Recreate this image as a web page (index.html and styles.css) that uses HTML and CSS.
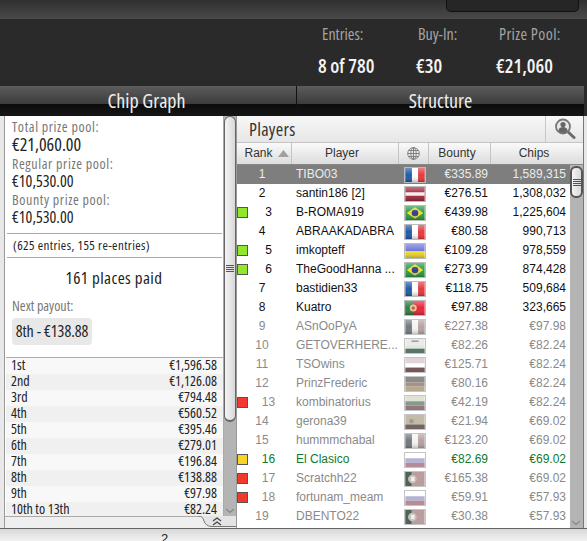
FILE: index.html
```html
<!DOCTYPE html>
<html lang="en">
<head>
    <meta charset="UTF-8">
    <title>Tournament Lobby</title>
    <link rel="stylesheet" href="styles.css">
</head>
<body>
    <svg class="defs" width="0" height="0">
        <linearGradient id="gloss" x1="0" y1="0" x2="0" y2="1">
            <stop offset="0" stop-color="#fff" stop-opacity=".35"/>
            <stop offset=".5" stop-color="#fff" stop-opacity="0"/>
            <stop offset="1" stop-color="#000" stop-opacity=".25"/>
        </linearGradient>
        <symbol id="fr" viewBox="0 0 22 16"><rect width="22" height="16" fill="#fff"/><rect width="7.500" height="16" fill="#1f5aa8"/><rect x="14.500" width="7.500" height="16" fill="#e5393c"/><rect width="22" height="16" fill="url(#gloss)"/></symbol>
        <symbol id="fr-out" viewBox="0 0 22 16"><rect width="22" height="16" fill="#f2f2f2"/><rect width="7.500" height="16" fill="#5a6068"/><rect x="14.500" width="7.500" height="16" fill="#a99090"/><rect width="22" height="16" fill="url(#gloss)"/></symbol>
        <symbol id="lv" viewBox="0 0 22 16"><rect width="22" height="16" fill="#a3283c"/><rect y="6" width="22" height="4" fill="#f4eeee"/><rect width="22" height="16" fill="url(#gloss)"/></symbol>
        <symbol id="br" viewBox="0 0 22 16"><rect width="22" height="16" fill="#2a9a45"/><path d="M11 1.500 20.500 8 11 14.500 1.500 8z" fill="#f2dc2c"/><circle cx="11" cy="8" r="3.800" fill="#2f3f8f"/><rect width="22" height="16" fill="url(#gloss)"/></symbol>
        <symbol id="ua" viewBox="0 0 22 16"><rect width="22" height="8" fill="#6d74d8"/><rect y="8" width="22" height="8" fill="#f0d92c"/><rect width="22" height="16" fill="url(#gloss)"/></symbol>
        <symbol id="pt" viewBox="0 0 22 16"><rect width="22" height="16" fill="#e5263a"/><rect width="9" height="16" fill="#2f7d45"/><circle cx="9" cy="8" r="4" fill="#e3c98a"/><circle cx="9" cy="8" r="2" fill="#c65a4a"/><rect width="22" height="16" fill="url(#gloss)"/></symbol>
        <symbol id="ae" viewBox="0 0 22 16"><rect width="22" height="6" fill="#e8e8e8"/><rect y="1.500" x="7" width="8" height="2" fill="#8a9a90"/><rect y="6" width="22" height="5" fill="#e2e2e2"/><rect y="11" width="22" height="5" fill="#3a6048"/></symbol>
        <symbol id="at" viewBox="0 0 22 16"><rect width="22" height="16" fill="#dccdd2"/><rect y="6" width="22" height="5" fill="#fff"/><rect y="11" width="22" height="5" fill="#5a3a3f"/></symbol>
        <symbol id="de" viewBox="0 0 22 16"><rect width="22" height="6" fill="#777"/><rect y="6" width="22" height="5" fill="#968078"/><rect y="11" width="22" height="5" fill="#a89c78"/></symbol>
        <symbol id="bg" viewBox="0 0 22 16"><rect width="22" height="6" fill="#dcdcd0"/><rect y="6" width="22" height="5" fill="#6f8a78"/><rect y="11" width="22" height="5" fill="#80606a"/></symbol>
        <symbol id="es" viewBox="0 0 22 16"><rect width="22" height="16" fill="#b9ae98"/><rect y="11" width="22" height="5" fill="#5c4a48"/><circle cx="7" cy="7" r="2.500" fill="#86907a"/></symbol>
        <symbol id="ru" viewBox="0 0 22 16"><rect width="22" height="6" fill="#fff"/><rect y="6" width="22" height="5" fill="#a6a6d0"/><rect y="11" width="22" height="5" fill="#a87885"/></symbol>
        <symbol id="ma" viewBox="0 0 22 16"><rect width="22" height="16" fill="#b08c90"/><rect width="7" height="16" fill="#2c4a3c"/><circle cx="8" cy="8" r="5" fill="#bdb6ad"/><rect x="6.500" y="5.500" width="4" height="5" fill="#eee"/></symbol>
    </svg>

    <div class="topbar"><div class="top-btn"></div></div>

    <div class="summary">
        <div class="stat stat-entries">
            <span class="stat-label">Entries:</span>
            <span class="stat-value">8 of 780</span>
        </div>
        <div class="stat stat-buyin">
            <span class="stat-label">Buy-In:</span>
            <span class="stat-value">€30</span>
        </div>
        <div class="stat stat-pool">
            <span class="stat-label">Prize Pool:</span>
            <span class="stat-value">€21,060</span>
        </div>
    </div>

    <div class="tabs">
        <div class="tab tab-graph">Chip Graph</div>
        <div class="tab tab-structure">Structure</div>
    </div>

    <div class="main">
        <div class="prize-panel">
            <div class="prize-body">
                <div class="prize-scroll">
                    <div class="pools">
                        <div class="pool-label">Total prize pool:</div>
                        <div class="pool-total">€21,060.00</div>
                        <div class="pool-label">Regular prize pool:</div>
                        <div class="pool-value">€10,530.00</div>
                        <div class="pool-label">Bounty prize pool:</div>
                        <div class="pool-value">€10,530.00</div>
                    </div>
                    <div class="entries-note">(625 entries, 155 re-entries)</div>
                    <div class="places">161 places paid</div>
                    <div class="next-label">Next payout:</div>
                    <div class="next-box">8th - €138.88</div>
                    <ul class="payouts">
                        <li><span>1st</span><span>€1,596.58</span></li>
                        <li><span>2nd</span><span>€1,126.08</span></li>
                        <li><span>3rd</span><span>€794.48</span></li>
                        <li><span>4th</span><span>€560.52</span></li>
                        <li><span>5th</span><span>€395.46</span></li>
                        <li><span>6th</span><span>€279.01</span></li>
                        <li><span>7th</span><span>€196.84</span></li>
                        <li><span>8th</span><span>€138.88</span></li>
                        <li><span>9th</span><span>€97.98</span></li>
                        <li><span>10th to 13th</span><span>€82.24</span></li>
                    </ul>
                </div>
                <div class="scrollbar scrollbar-left">
                    <div class="thumb thumb-left"><div class="grip"></div></div>
                    <svg class="arrow-down" width="10" height="6" viewBox="0 0 10 6"><path d="M1 1l4 3.500L9 1" fill="none" stroke="#888" stroke-width="1.200"/></svg>
                </div>
            </div>
            <div class="prize-foot">
                <svg class="collapse" width="38" height="11" viewBox="0 0 38 11">
                    <path d="M0 0C4 0 5 2 6 5 7 8 9 10 13 10.500H38V0z" fill="#e4e4e4"/>
                    <path d="M0 0C4 0 5 2 6 5 7 8 9 10 13 10.500H38" fill="none" stroke="#777"/>
                    <path d="M15 5l4-3 4 3M15 9l4-3 4 3" fill="none" stroke="#444" stroke-width="1.200"/>
                </svg>
            </div>
        </div>

        <div class="players">
            <div class="players-title">
                <span class="players-name">Players</span>
                <div class="search-btn">
                    <svg width="22" height="22" viewBox="0 0 22 22">
                        <path d="M13 13l7 6.500" stroke="#6b6b6b" stroke-width="3" stroke-linecap="round"/>
                        <circle cx="9" cy="8.500" r="7" fill="#e8e8e8" stroke="#777" stroke-width="1.800"/>
                        <circle cx="9" cy="6.500" r="2.600" fill="#666"/>
                        <path d="M4.500 13c0-3 2-4 4.500-4s4.500 1 4.500 4a6 6 0 0 1-9 0z" fill="#666"/>
                    </svg>
                </div>
            </div>
            <div class="list-head">
                <div class="col-head head-rank">Rank<svg class="sort" width="11" height="7" viewBox="0 0 11 7"><path d="M5.500 0 11 7H0z" fill="#a0a0a0"/></svg></div>
                <div class="col-head head-player">Player</div>
                <div class="col-head head-globe">
                    <svg width="13" height="13" viewBox="0 0 13 13" fill="none" stroke="#777" stroke-width=".9"><circle cx="6.500" cy="6.500" r="5.800"/><ellipse cx="6.500" cy="6.500" rx="2.700" ry="5.800"/><path d="M.7 6.500h11.600M1.500 3.500h10M1.500 9.500h10M6.500.7v11.600"/></svg>
                </div>
                <div class="col-head head-bounty">Bounty</div>
                <div class="col-head head-chips">Chips</div>
            </div>
            <div class="list-body">
                <div class="rows">
                    <div class="row row-selected"><div class="rank">1</div><div class="name">TIBO03</div><svg class="flag"><use href="#fr"/></svg><div class="bounty">€335.89</div><div class="chips">1,589,315</div></div>
                    <div class="row"><div class="rank">2</div><div class="name">santin186 [2]</div><svg class="flag"><use href="#lv"/></svg><div class="bounty">€276.51</div><div class="chips">1,308,032</div></div>
                    <div class="row"><div class="rank marked"><i class="mark mark-green"></i>3</div><div class="name">B-ROMA919</div><svg class="flag"><use href="#br"/></svg><div class="bounty">€439.98</div><div class="chips">1,225,604</div></div>
                    <div class="row"><div class="rank">4</div><div class="name">ABRAAKADABRA</div><svg class="flag"><use href="#fr"/></svg><div class="bounty">€80.58</div><div class="chips">990,713</div></div>
                    <div class="row"><div class="rank marked"><i class="mark mark-green"></i>5</div><div class="name">imkopteff</div><svg class="flag"><use href="#ua"/></svg><div class="bounty">€109.28</div><div class="chips">978,559</div></div>
                    <div class="row"><div class="rank marked"><i class="mark mark-green"></i>6</div><div class="name">TheGoodHanna ...</div><svg class="flag"><use href="#br"/></svg><div class="bounty">€273.99</div><div class="chips">874,428</div></div>
                    <div class="row"><div class="rank">7</div><div class="name">bastidien33</div><svg class="flag"><use href="#fr"/></svg><div class="bounty">€118.75</div><div class="chips">509,684</div></div>
                    <div class="row"><div class="rank">8</div><div class="name">Kuatro</div><svg class="flag"><use href="#pt"/></svg><div class="bounty">€97.88</div><div class="chips">323,665</div></div>
                    <div class="row row-out"><div class="rank">9</div><div class="name">ASnOoPyA</div><svg class="flag"><use href="#fr-out"/></svg><div class="bounty">€227.38</div><div class="chips">€97.98</div></div>
                    <div class="row row-out"><div class="rank">10</div><div class="name">GETOVERHERE...</div><svg class="flag"><use href="#ae"/></svg><div class="bounty">€82.26</div><div class="chips">€82.24</div></div>
                    <div class="row row-out"><div class="rank">11</div><div class="name">TSOwins</div><svg class="flag"><use href="#at"/></svg><div class="bounty">€125.71</div><div class="chips">€82.24</div></div>
                    <div class="row row-out"><div class="rank">12</div><div class="name">PrinzFrederic</div><svg class="flag"><use href="#de"/></svg><div class="bounty">€80.16</div><div class="chips">€82.24</div></div>
                    <div class="row row-out"><div class="rank marked"><i class="mark mark-red"></i>13</div><div class="name">kombinatorius</div><svg class="flag"><use href="#bg"/></svg><div class="bounty">€42.19</div><div class="chips">€82.24</div></div>
                    <div class="row row-out"><div class="rank">14</div><div class="name">gerona39</div><svg class="flag"><use href="#es"/></svg><div class="bounty">€21.94</div><div class="chips">€69.02</div></div>
                    <div class="row row-out"><div class="rank">15</div><div class="name">hummmchabal</div><svg class="flag"><use href="#fr-out"/></svg><div class="bounty">€123.20</div><div class="chips">€69.02</div></div>
                    <div class="row row-out row-hero"><div class="rank marked"><i class="mark mark-yellow"></i>16</div><div class="name">El Clasico</div><svg class="flag"><use href="#ru"/></svg><div class="bounty">€82.69</div><div class="chips">€69.02</div></div>
                    <div class="row row-out"><div class="rank marked"><i class="mark mark-red"></i>17</div><div class="name">Scratchh22</div><svg class="flag"><use href="#ma"/></svg><div class="bounty">€165.38</div><div class="chips">€69.02</div></div>
                    <div class="row row-out"><div class="rank marked"><i class="mark mark-red"></i>18</div><div class="name">fortunam_meam</div><svg class="flag"><use href="#ru"/></svg><div class="bounty">€59.91</div><div class="chips">€57.93</div></div>
                    <div class="row row-out"><div class="rank">19</div><div class="name">DBENTO22</div><svg class="flag"><use href="#ma"/></svg><div class="bounty">€30.38</div><div class="chips">€57.93</div></div>
                    <div class="row row-out"><div class="rank"></div><div class="name"></div><svg class="flag"><use href="#ru"/></svg></div>
                </div>
                <div class="scrollbar scrollbar-right">
                    <div class="thumb thumb-right"><div class="grip"></div></div>
                    <svg class="arrow-down" width="10" height="6" viewBox="0 0 10 6"><path d="M1 1l4 3.500L9 1" fill="none" stroke="#888" stroke-width="1.200"/></svg>
                </div>
            </div>
        </div>
    </div>

    <div class="bottom-bar"><span class="page-num">2</span></div>
</body>
</html>
```

FILE: styles.css
```css
:root {
    --narrow: "Open Sans", "Liberation Sans", sans-serif;
}

* {
    margin: 0;
    padding: 0;
    box-sizing: border-box;
}

body {
    width: 587px;
    height: 541px;
    overflow: hidden;
    background: #ececec;
    font-family: "Liberation Sans", Arial, sans-serif;
    font-size: 12px;
}

.defs {
    position: absolute;
}

/* top dark area */
.topbar {
    height: 19px;
    padding-left: 446px;
    background: linear-gradient(#303030, #4a4a4a);
}

.top-btn {
    width: 133px;
    height: 12px;
    background: #262626;
    border: 1px solid #111;
    border-top: none;
    border-radius: 0 0 5px 5px;
}

.summary {
    height: 67px;
    padding: 7px 0 0 318px;
    display: flex;
    background: #2a2a2a;
    font-family: var(--narrow);
    font-stretch: 75%;
}

.stat {
    display: flex;
    flex-direction: column;
    gap: 13px;
}

.stat-entries { width: 98px; }
.stat-buyin { width: 80px; }

.stat-label {
    color: #a4a4a4;
    font-size: 16px;
    line-height: 17px;
}

.stat-value {
    color: #f4f4f4;
    font-size: 19.5px;
    font-weight: 600;
    line-height: 20px;
    white-space: nowrap;
}

.stat-entries .stat-label { padding-left: 4px; }
.stat-buyin .stat-label { padding-left: 2px; }
.stat-pool .stat-label { padding-left: 3px; letter-spacing: .4px; }

.tabs {
    height: 30px;
    display: flex;
    background: #2a2a2a;
}

.tab {
    text-align: center;
    color: #eee;
    font-family: var(--narrow);
    font-stretch: 75%;
    font-size: 20px;
    line-height: 29px;
    background: linear-gradient(#5c5c5c, #3c3c3c 60%, #0c0c0c 60%, #161616);
}

.tab-graph {
    width: 297px;
    padding-right: 3px;
    border-right: 1px solid #111;
}

.tab-structure {
    width: 287px;
}

/* main two panels */
.main {
    height: 413px;
    display: flex;
    padding: 0 3px 0 4px;
    border-bottom: 1px solid #666;
    background: #e8e8e8;
}

.prize-panel {
    width: 232px;
    border-left: 1px solid #999;
    display: flex;
    flex-direction: column;
}

.prize-body {
    flex: 1;
    display: flex;
    min-height: 0;
    background: #fff;
}

.prize-scroll {
    width: 219px;
    font-family: var(--narrow);
    font-stretch: 75%;
    color: #222;
}

.pools {
    padding: 3px 0 0 5px;
    border-bottom: 1px solid #aaa;
    margin: 0 1px 0 2px;
    height: 118px;
}

.pool-label {
    color: #777;
    font-size: 14px;
    letter-spacing: .6px;
    line-height: 16px;
}

.pool-total {
    font-size: 18px;
    line-height: 18px;
    margin-bottom: 3px;
}

.pool-value {
    font-size: 16px;
    line-height: 18px;
    margin-bottom: 2px;
}

.entries-note {
    margin: 0 1px 0 2px;
    height: 24px;
    padding-left: 6px;
    line-height: 23px;
    font-size: 13px;
    letter-spacing: .4px;
    border-bottom: 1px solid #aaa;
}

.places {
    text-align: center;
    font-size: 17px;
    letter-spacing: .4px;
    line-height: 20px;
    margin-top: 10px;
}

.next-label {
    color: #777;
    font-size: 14px;
    line-height: 16px;
    margin: 10px 0 0 7px;
}

.next-box {
    width: 80px;
    height: 27px;
    margin: 4px 0 0 7px;
    background: #e8e8e8;
    border-radius: 4px;
    font-size: 16px;
    line-height: 26px;
    text-align: center;
    white-space: nowrap;
}

.payouts {
    list-style: none;
    margin: 12px 0 0 1px;
    border-top: 1px solid #aaa;
    font-size: 14px;
}

.payouts li {
    height: 16px;
    display: flex;
    justify-content: space-between;
    padding: 0 6px 0 5px;
    line-height: 13px;
    background: #f8f8f8;
}

.payouts li:nth-child(even) {
    background: #f0f0f0;
}

.prize-foot {
    height: 12px;
    display: flex;
    justify-content: flex-end;
    background: #efefef;
    border-top: 1px solid #aaa;
}

.collapse {
    display: block;
    margin-top: -1px;
}

/* scrollbars */
.scrollbar {
    width: 13px;
    position: relative;
    background: #b4b4b4;
}

.scrollbar-left {
    border-left: 1px solid #aaa;
}

.thumb {
    border: 2px solid #555;
    border-radius: 6px;
    background: linear-gradient(90deg, #f4f4f4, #d8d8d8);
    display: flex;
    align-items: center;
    justify-content: center;
}

.thumb-left {
    height: 306px;
    width: 12px;
    border-width: 1px 1px 2px;
    border-color: #666;
}

.thumb-right {
    height: 32px;
    width: 13px;
    margin-top: 1px;
}

.grip {
    width: 8px;
    height: 7px;
    background: repeating-linear-gradient(#555 0 1px, transparent 1px 2px);
}

.arrow-down {
    position: absolute;
    bottom: 2px;
    left: 1px;
}

/* players list */
.players {
    flex: 1;
    display: flex;
    flex-direction: column;
    min-width: 0;
    border-left: 1px solid #999;
    border-right: 1px solid #777;
}

.players-title {
    height: 27px;
    display: flex;
    justify-content: space-between;
    background: linear-gradient(#f8f8f8, #e6e6e6);
    border-bottom: 1px solid #c4c4c4;
}

.players-name {
    font-size: 18px;
    letter-spacing: .3px;
    font-family: var(--narrow);
    font-stretch: 75%;
    line-height: 27px;
    margin-left: 12px;
    color: #333;
}

.search-btn {
    width: 38px;
    display: flex;
    justify-content: center;
    align-items: center;
    border-left: 1px solid #c8c8c8;
}

.list-head {
    height: 22px;
    display: flex;
    background: linear-gradient(#fafafa, #dcdcdc);
    border-bottom: 1px solid #888;
    color: #333;
    line-height: 21px;
}

.col-head {
    display: flex;
    justify-content: center;
    align-items: center;
    border-right: 1px solid #c4c4c4;
}

.head-rank { width: 55px; gap: 5px; padding-left: 5px; }
.head-player { width: 107px; padding-right: 6px; }
.head-globe { width: 30px; }
.head-bounty { width: 62px; padding-right: 5px; }
.head-chips { width: 86px; border-right: none; }

.list-body {
    flex: 1;
    display: flex;
    min-height: 0;
    background: #fff;
}

.rows {
    flex: 1;
    min-width: 0;
    overflow: hidden;
}

.row {
    height: 19px;
    display: flex;
    align-items: center;
    line-height: 19px;
    color: #111;
}

.rank {
    width: 50px;
    text-align: center;
    position: relative;
}

.rank.marked {
    padding-left: 13px;
}

.mark {
    position: absolute;
    left: 0;
    top: 4px;
    width: 11px;
    height: 11px;
    border: 1px solid #555;
}

.mark-green { background: #8fe82e; }
.mark-red { background: #f03a2e; }
.mark-yellow { background: #f5d52a; }

.name {
    width: 117px;
    padding-left: 9px;
    white-space: nowrap;
}

.flag {
    width: 22px;
    height: 16px;
    border: 1px solid #bbb;
}

.bounty {
    width: 62px;
    text-align: right;
}

.chips {
    width: 78px;
    text-align: right;
}

.row-selected {
    background: #7e7e7e;
    color: #ececec;
}

.row-out {
    color: #8a8a8a;
}

.row-out .flag {
    opacity: .85;
}

.row-hero {
    color: #0f7a2e;
}

.bottom-bar {
    height: 12px;
    overflow: hidden;
    padding-left: 161px;
    background: linear-gradient(#d8d8d8, #f2f2f2);
    font-size: 13px;
    line-height: 14px;
    color: #222;
}

.page-num {
    display: block;
    margin-top: 3px;
}
```
